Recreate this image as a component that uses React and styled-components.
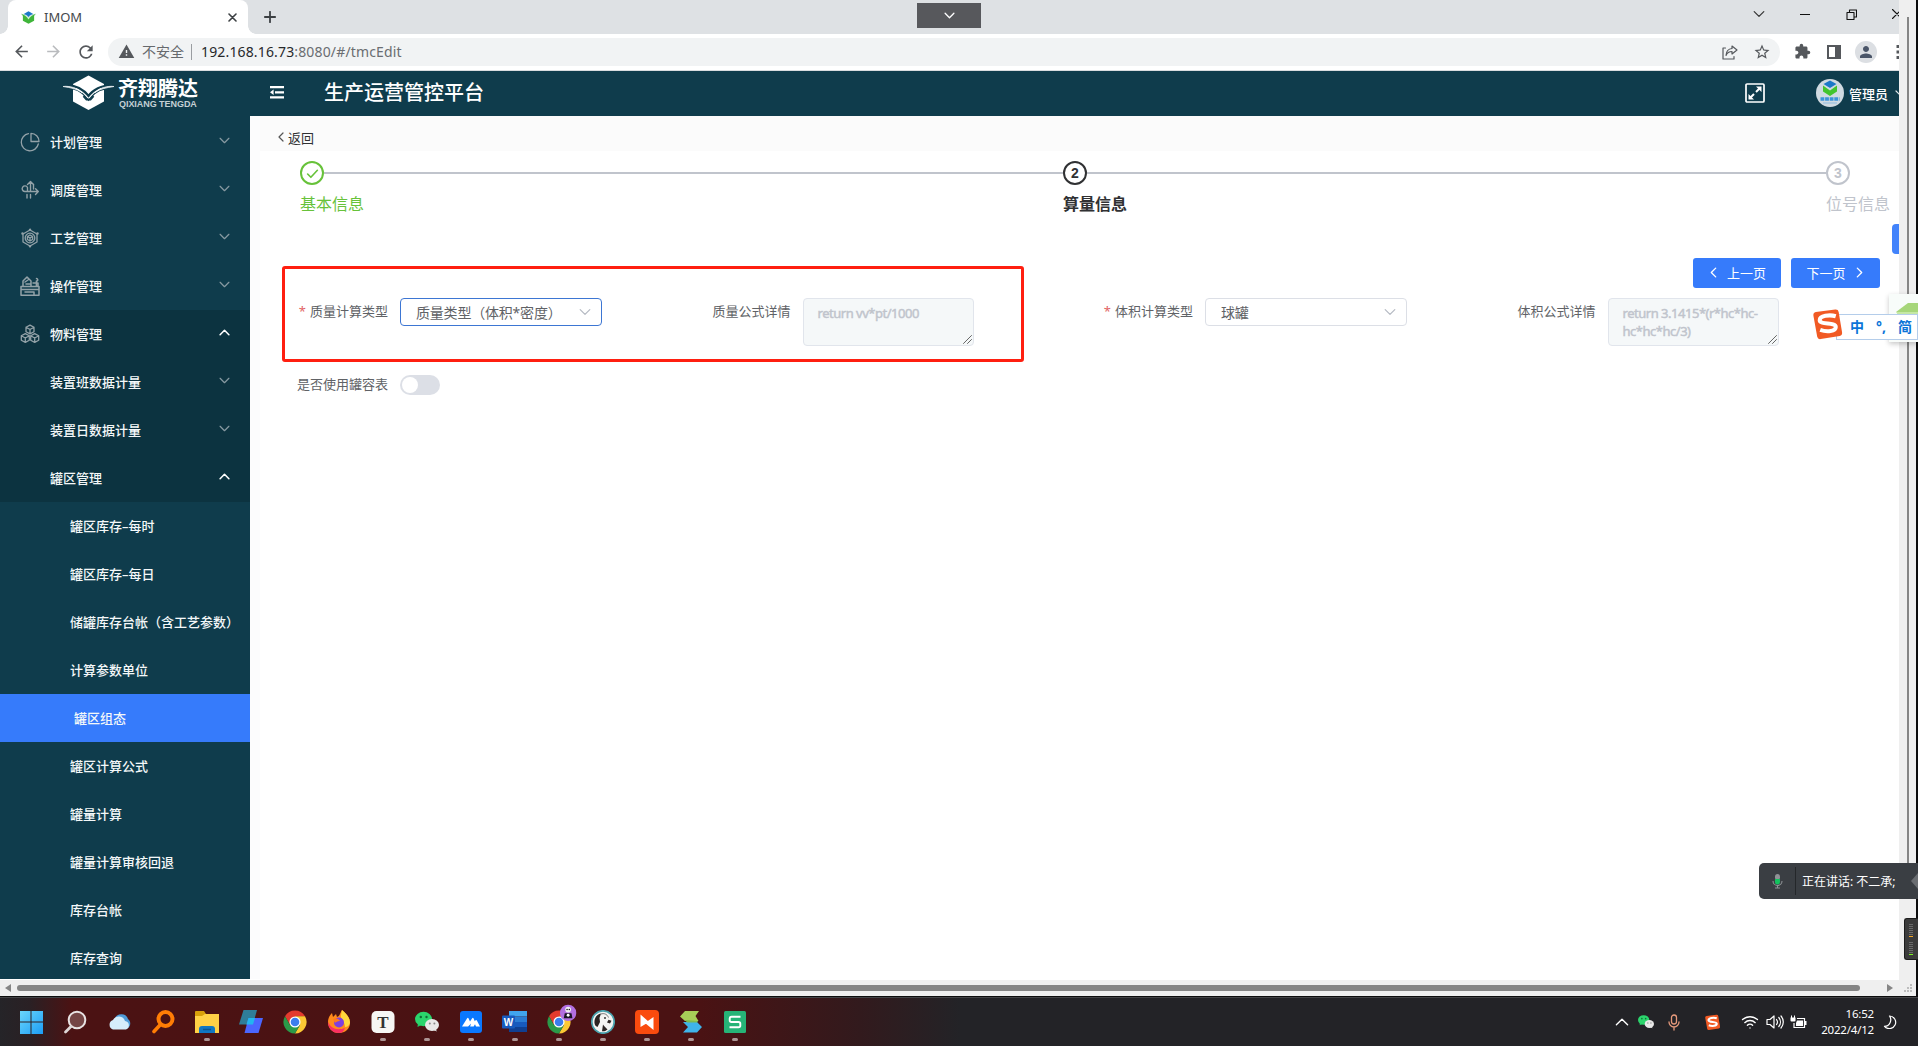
import React from 'react';
import styled, { createGlobalStyle, css } from 'styled-components';
import { MdArrowBack, MdArrowForward, MdRefresh, MdWarning, MdStarBorder, MdExtension, MdPerson } from 'react-icons/md';
import { Wifi } from 'lucide-react';

const Global = createGlobalStyle`
  * { box-sizing: border-box; }
  html, body { margin: 0; padding: 0; overflow: hidden; }
  body { font-family: "Noto Sans", "Noto Sans CJK SC", sans-serif; font-size: 13px; color: #333; }
  svg { display: block; flex: none; }
`;

const Screen = styled.div`
  position: relative;
  width: 1918px;
  height: 1046px;
  overflow: hidden;
  display: flex;
  flex-direction: column;
  background: #fff;
`;

const Win = styled.div`
  height: 997px;
  display: flex;
  flex-direction: column;
  border-right: 2px solid #0c0c0d;
  border-bottom: 1px solid #0c0c0d;
  background: #efefef;
`;

const Upper = styled.div`
  display: flex;
  height: 980px;
`;

const Page = styled.div`
  width: 1899px;
  height: 980px;
  overflow: hidden;
  background: #fff;
  flex: none;
`;

const VTrack = styled.div`
  flex: 1;
  display: flex;
  justify-content: center;
  padding-top: 17px;
`;

const VThumb = styled.div`
  width: 2px;
  height: 862px;
  background: #858585;
`;

const HTrack = styled.div`
  height: 16px;
  display: flex;
  align-items: center;
  padding: 0 3px 0 5px;
`;

const HThumb = styled.div`
  width: 1844px;
  height: 6px;
  margin: 0 27px 0 6px;
  border-radius: 3px;
  background: #858585;
`;

/* ---------- browser chrome ---------- */

const TabStrip = styled.div`
  height: 34px;
  display: flex;
  background: #dee1e4;
  padding-left: 8px;
`;

const Tab = styled.div`
  position: relative;
  width: 240px;
  display: flex;
  align-items: center;
  padding: 0 11px 0 13px;
  background: #fff;
  border-radius: 8px 8px 0 0;
  color: #45484c;
  font-size: 13px;
  &::before, &::after {
    content: "";
    position: absolute;
    bottom: 0;
    width: 8px;
    height: 8px;
  }
  &::before { left: -8px; background: radial-gradient(circle at 0 0, transparent 7.5px, #fff 8px); }
  &::after { right: -8px; background: radial-gradient(circle at 100% 0, transparent 7.5px, #fff 8px); }
`;

const TabTitle = styled.span`
  margin-left: 8px;
  flex: 1;
  line-height: 18px;
`;

const NewTab = styled.div`
  padding: 11px 0 0 16px;
  flex: 1;
`;

const WinButton = styled.div`
  width: 46px;
  height: 28px;
  flex: none;
  display: flex;
  align-items: center;
  justify-content: center;
`;

const WinButtons = styled.div`
  display: flex;
  width: 163px;
  overflow: hidden;
`;

const Toolbar = styled.div`
  height: 37px;
  display: flex;
  align-items: center;
  padding: 0 0 1px 12px;
  border-bottom: 1px solid #d9dcdf;
  color: #55585c;
  overflow: hidden;
`;

const NavIcon = styled.div`
  width: 32px;
  flex: none;
  display: flex;
  color: ${p => (p.$dim ? '#b9bbbe' : '#55585c')};
`;

const Address = styled.div`
  width: 1672px;
  height: 28px;
  margin-right: 6px;
  display: flex;
  align-items: center;
  padding: 0 2px 0 10px;
  border-radius: 14px;
  background: #f1f3f4;
  flex: none;
`;

const Insecure = styled.span`
  margin-left: 7px;
  padding-right: 7px;
  font-size: 14px;
  line-height: 16px;
  color: #66696d;
  border-right: 1px solid #9a9da1;
`;

const Url = styled.span`
  margin-left: 9px;
  flex: 1;
  font-size: 14px;
  letter-spacing: 0.15px;
  color: #6a6d71;
  b { font-weight: 400; color: #26282b; }
`;

const ToolIcon = styled.div`
  width: 32px;
  display: flex;
  justify-content: center;
  flex: none;
`;

const Profile = styled.div`
  width: 22px;
  height: 22px;
  border-radius: 50%;
  background: #dcdfe3;
  display: flex;
  align-items: center;
  justify-content: center;
  color: #4a5568;
`;

/* ---------- application ---------- */

const Header = styled.header`
  height: 45px;
  display: flex;
  align-items: center;
  padding-bottom: 1px;
  background: #0f3c4c;
  color: #fff;
`;

const Brand = styled.div`
  width: 250px;
  display: flex;
  align-items: center;
  padding-left: 63px;
`;

const BrandText = styled.div`
  margin-left: 4px;
`;

const BrandName = styled.div`
  font-size: 20px;
  line-height: 22px;
  font-weight: 700;
  white-space: nowrap;
`;

const BrandLatin = styled.div`
  padding-left: 1px;
  font: 700 9px/9px "Liberation Sans", sans-serif;
  letter-spacing: -0.05px;
  white-space: nowrap;
  color: #c3d0d4;
`;

const MenuToggle = styled.div`
  padding: 0 40px 1px 20px;
`;

const AppTitle = styled.h1`
  margin: 0;
  flex: 1;
  font-size: 20px;
  font-weight: 500;
  line-height: 30px;
`;

const UserName = styled.span`
  margin: 0 7px 0 5px;
  font-size: 13px;
  font-weight: 500;
`;

const UserBox = styled.div`
  width: 83px;
  margin-left: 51px;
  display: flex;
  align-items: center;
  overflow: hidden;
  white-space: nowrap;
`;

const Body = styled.div`
  display: flex;
  height: 863px;
`;

const Sidebar = styled.nav`
  width: 250px;
  flex: none;
  padding-top: 2px;
  background: #0f3c4c;
  overflow: hidden;
`;

const MenuRow = styled.div`
  height: 48px;
  display: flex;
  align-items: center;
  padding: 0 20.5px 0 ${p => p.$indent}px;
  background: ${p => (p.$active ? '#367bfb' : p.$dark ? '#0c3340' : 'transparent')};
  color: #f4f8f9;
  font-size: 13px;
  font-weight: 500;
  white-space: nowrap;
`;

const MenuIcon = styled.div`
  width: 30px;
  display: flex;
  color: #93a2a8;
`;

const MenuLabel = styled.span`
  flex: 1;
  line-height: 20px;
`;

const Caret = styled.div`
  padding-bottom: 4px;
  color: ${p => (p.$open ? '#fff' : '#8799a1')};
`;

const Main = styled.main`
  flex: 1;
  display: flex;
  flex-direction: column;
  background: #fff;
  border-left: 10px solid #fcfcfd;
`;

const BackBar = styled.div`
  height: 35px;
  display: flex;
  align-items: center;
  padding: 7px 0 0 16px;
  background: #fbfbfb;
  color: #303133;
  gap: 2px;
`;

const Steps = styled.div`
  height: 73px;
  display: flex;
  padding: 10px 0 0 40px;
`;

const stepColor = { done: '#67c23a', current: '#303133', wait: '#c0c4cc' };

const Step = styled.div`
  width: ${p => (p.$last ? 73 : 763)}px;
  flex: none;
  color: ${p => stepColor[p.$state]};
`;

const StepHead = styled.div`
  display: flex;
  align-items: center;
  height: 24px;
  &::after {
    content: "";
    flex: 1;
    height: 2px;
    background: ${p => (p.$last ? 'transparent' : '#c0c4cc')};
  }
`;

const StepCircle = styled.div`
  width: 24px;
  height: 24px;
  flex: none;
  border: 2px solid currentColor;
  border-radius: 50%;
  display: flex;
  align-items: center;
  justify-content: center;
  font: ${p => (p.$bold ? 700 : 500)} 14px/1 "Liberation Sans", sans-serif;
`;

const StepTitle = styled.div`
  font-size: 16px;
  line-height: 38px;
  font-weight: ${p => (p.$bold ? 700 : 400)};
`;

const DrawerHandle = styled.div`
  width: 7px;
  height: 30px;
  margin-left: auto;
  border-radius: 4px 0 0 4px;
  background: #4283fb;
`;

const Actions = styled.div`
  height: 44px;
  display: flex;
  justify-content: flex-end;
  gap: 10px;
  padding: 4px 19px 0 0;
`;

const Button = styled.button`
  width: ${p => p.$w}px;
  height: 30px;
  padding: 0 0 1px;
  display: flex;
  align-items: center;
  justify-content: center;
  gap: 8px;
  border: 0;
  border-radius: 3px;
  background: #367bfb;
  color: #fff;
  font: 400 13px "Noto Sans", "Noto Sans CJK SC", sans-serif;
`;

const Form = styled.div`
  display: grid;
  grid-template-columns: repeat(4, 402.5px);
  grid-template-rows: 73px 30px;
  padding-left: 20px;
`;

const Field = styled.div`
  display: flex;
  align-items: flex-start;
`;

const Label = styled.label`
  width: 120px;
  flex: none;
  padding-right: 12px;
  text-align: right;
  line-height: 27px;
  color: #606266;
  font-size: 13px;
  &::before {
    content: ${p => (p.$required ? '"*"' : 'none')};
    color: #e26466;
    margin-right: 4px;
  }
`;

const Select = styled.div`
  width: 202px;
  height: 28px;
  display: flex;
  align-items: center;
  justify-content: space-between;
  padding: 0 10px 1px 15px;
  border: 1px solid ${p => (p.$focus ? '#3d76d3' : '#dcdfe6')};
  border-radius: 4px;
  color: #606266;
  font-size: 14px;
  letter-spacing: -0.2px;
  white-space: nowrap;
`;

const TextArea = styled.div`
  position: relative;
  width: 171px;
  height: 48px;
  padding: 5px 14px;
  border: 1px solid #e1e5ec;
  border-radius: 4px;
  background: #f5f8f9;
  color: #c0c4cc;
  font: 400 13px/18px "Noto Sans", sans-serif;
  letter-spacing: -0.48px;
  -webkit-text-stroke: 0.45px #c0c4cc;
  white-space: pre;
`;

const Grip = styled.div`
  position: absolute;
  right: 1px;
  bottom: 1px;
`;

const Switch = styled.div`
  width: 40px;
  height: 20px;
  margin-top: 4px;
  padding: 2px;
  border-radius: 10px;
  background: #dcdfe6;
  &::before {
    content: "";
    display: block;
    width: 16px;
    height: 16px;
    border-radius: 50%;
    background: #fff;
  }
`;

/* ---------- overlays ---------- */

const floating = css`position: absolute;`;

const RedFrame = styled.div`
  ${floating}
  left: 282px;
  top: 266px;
  width: 742px;
  height: 96px;
  border: 3px solid #ff1f10;
  border-radius: 3px;
`;

const PullTab = styled.div`
  ${floating}
  left: 917px;
  top: 3px;
  width: 64px;
  height: 25px;
  background: #57585c;
  display: flex;
  align-items: center;
  justify-content: center;
`;

const ImeBack = styled.div`
  ${floating}
  left: 1889px;
  top: 294px;
  width: 29px;
  height: 48px;
  padding-top: 1px;
  background: #f8fcfa;
  box-shadow: 0 2px 5px rgba(0, 0, 0, 0.22);
`;

const ImeBar = styled.div`
  ${floating}
  left: 1836px;
  top: 314px;
  width: 82px;
  height: 26px;
  display: flex;
  align-items: center;
  padding: 0 0 1px 13px;
  border: 1px solid #b4cdea;
  background: #fff;
  color: #0b74d8;
  font-size: 14px;
  font-weight: 700;
  white-space: nowrap;
`;

const ImeChar = styled.span`
  width: ${p => p.$w}px;
  line-height: 22px;
  flex: none;
`;

const ImeLogo = styled.div`
  ${floating}
  left: 1811px;
  top: 308px;
`;

const Toast = styled.div`
  ${floating}
  left: 1759px;
  top: 863px;
  width: 159px;
  height: 36px;
  display: flex;
  align-items: center;
  border-radius: 5px 0 0 5px;
  background: #3a3e43;
  color: #fff;
  font-size: 12px;
  white-space: nowrap;
`;

const ToastMic = styled.div`
  width: 37px;
  height: 28px;
  display: flex;
  align-items: center;
  justify-content: center;
  border-right: 1px solid #24272a;
`;

const ToastText = styled.span`
  margin-left: 6px;
  flex: 1;
`;

const Meter = styled.div`
  ${floating}
  left: 1904px;
  top: 918px;
  width: 14px;
  height: 42px;
  padding: 5px 0 0 4px;
  border: 1px solid #1c1c1c;
  border-right: 0;
  border-radius: 3px 0 0 3px;
  background: #3b3b3b;
`;

const Bar = styled.div`
  width: 4px;
  height: 1px;
  margin-bottom: ${p => (p.$gap ? 5 : 1)}px;
  background: ${p => p.$c || '#6a6a6a'};
`;

/* ---------- taskbar ---------- */

const Taskbar = styled.footer`
  height: 49px;
  display: flex;
  padding-left: 8.5px;
  border-top: 1px solid #434446;
  background: linear-gradient(90deg, #252428 0, #2a2024 30px, #4b1213 72px, #4a1213 700px, #321a1d 860px, #232327 960px, #232327 100%);
`;

const Task = styled.div`
  width: 44px;
  display: flex;
  flex-direction: column;
  align-items: center;
  padding-top: 12px;
  &::after {
    content: "";
    width: 6px;
    height: 3px;
    margin-top: 4px;
    border-radius: 2px;
    background: ${p => (p.$running ? '#ad9595' : 'transparent')};
  }
`;

const Tray = styled.div`
  margin-left: auto;
  display: flex;
  align-items: center;
  padding-right: 13px;
  color: #fff;
`;

const TrayItem = styled.div`
  width: ${p => p.$w}px;
  display: flex;
  justify-content: center;
`;

const Clock = styled.div`
  width: 62px;
  text-align: right;
  font: 400 11.5px/16px "Noto Sans", sans-serif;
  letter-spacing: -0.2px;
  white-space: nowrap;
`;

/* ---------- drawings ---------- */

const Stroke = ({ w = 18, h = w, vb = `0 0 ${w} ${h}`, sw = 1.2, children, color = 'currentColor' }) => (
  <svg width={w} height={h} viewBox={vb} fill="none" stroke={color} strokeWidth={sw} strokeLinecap="round" strokeLinejoin="round">{children}</svg>
);

const Chevron = ({ dir = 'down', size = 10, sw = 1.2, color }) => {
  const d = { down: 'M1 3l4 4 4-4', up: 'M1 7l4-4 4 4', left: 'M7 1L3 5l4 4', right: 'M3 1l4 4-4 4' }[dir];
  return <Stroke w={size} vb="0 0 10 10" sw={sw} color={color}><path d={d} /></Stroke>;
};

const icons = {
  plan: <Stroke w={20} sw={1.3}><path d="M8.500 1.700A8.600 8.600 0 1 0 18.300 12" /><path d="M11 1.300V9.500h8A8 8 0 0 0 11 1.300z" /></Stroke>,
  dispatch: <Stroke w={20} sw={1.4}><path d="M10.500 11V1.800M7.500 4.500l3-3 3 3" /><path d="M7.500 11.500V7.500a2.800 2.800 0 1 0-2.800 4H18M15.500 8.800l2.800 2.800-2.800 2.800M13.500 4.500v4.500M7 14.500v3.500M10.500 14.500v3.500" /></Stroke>,
  craft: <Stroke w={20} sw={1.3}><path d="M10 2l7 4v8l-7 4-7-4V6z" /><circle cx="10" cy="10" r="4.800" /><path d="M10 7l2.600 1.500v3L10 13l-2.600-1.500v-3zM7.400 8.500L10 10l2.600-1.500M10 10v3" /><circle cx="10" cy="1.800" r=".6" /><circle cx="2.500" cy="5.500" r=".6" /><circle cx="17.500" cy="5.500" r=".6" /><circle cx="10" cy="18.200" r=".6" /></Stroke>,
  operate: <Stroke w={20} sw={1.5}><path d="M1 10.500h18v8.700H1zM1 13.500h18M5 16h9v3M3 10V5l4-4 4 4v5M5 6l3-2M16.500 2.500a1.300 1.300 0 1 1-.1 2.600v5M13 7h5v3M6 8h4" /></Stroke>,
  material: (
    <Stroke w={20} sw={1.3}>
      {[[10, 5.500], [5.300, 14], [14.700, 14]].map(([x, y]) => <path key={x} d={`M${x} ${y - 4.400}l4 2.200v4.400l-4 2.200-4-2.200v-4.400zM${x - 4} ${y - 2.200}l4 2.200 4-2.200M${x} ${y}v4.400`} />)}
    </Stroke>
  ),
};

const Leaf = ({ s }) => (
  <svg width={s} height={s} viewBox="0 0 24 24">
    <path d="M12 2l9 5-9 6-9-6z" fill="#1b78c8" />
    <path d="M0 6c6 1 9 3 12 6 3-3 6-5 12-6-2 2-3 3-3 4v7l-9 5-9-5v-7C3 9 2 8 0 6z" fill="#3fb53a" />
    <path d="M0 6c7 0 10 3 12 5 2-2 5-5 12-5-6 2-9 5-12 9C9 11 6 8 0 6z" fill="#fff" opacity=".75" />
  </svg>
);

const BrandMark = () => (
  <svg width="51" height="36" viewBox="0 0 51 36">
    <path d="M25.500 0.500L41 9v17.500L25.500 35 10 26.500V9z" fill="#fff" />
    <path d="M0 11.500c11-1 20 4 25.500 11C31 15 39 11 51 11.500" fill="none" stroke="#0f3c4c" strokeWidth="4.500" />
    <path d="M0 11.500c7-.8 14 1.500 19 6C14 13.800 7 12.500 0 11.500zM51 11.500c-7-.8-14 1.500-19 6 5-3.700 12-5 19-6z" fill="#fff" stroke="#dfe7ea" strokeWidth=".9" />
    <path d="M13 13.500c5 2 8.500 5 12.500 10 4-5 7.500-8 12.500-10" fill="none" stroke="#fff" strokeWidth="1.200" />
    <path d="M20.500 21l3 3.500h4l3-3.500" fill="none" stroke="#0f3c4c" strokeWidth="2" />
  </svg>
);

const Chrome = ({ s = 24, badge }) => (
  <svg width={s} height={s} viewBox="-0.500 -0.500 25 25" overflow="visible">
    <path d="M12 6h10.400A12 12 0 0 0 1.600 6L7 15z" fill="#e33b2e" />
    <path d="M17.200 15L12 24A12 12 0 0 0 22.400 6H12z" fill="#fcc934" />
    <path d="M6.800 15L1.600 6A12 12 0 0 0 12 24l5.200-9z" fill="#2a9a48" />
    <circle cx="12" cy="12" r="5.800" fill="#fff" /><circle cx="12" cy="12" r="4.500" fill="#3b7ded" />
    {badge && <g><circle cx="21.500" cy="2.500" r="8.500" fill="#b26fe0" /><circle cx="21.500" cy="-1" r="3" fill="#eee" /><path d="M18 3h7l1 5h-9z" fill="#191522" /><circle cx="21.500" cy="5" r="1.500" fill="#fff" /><circle cx="20.400" cy="-1" r=".7" /><circle cx="22.700" cy="-1" r=".7" /></g>}
  </svg>
);

const WeChat = ({ s = 24 }) => (
  <svg width={s} height={s} viewBox="0 0 24 24">
    <path d="M3 12l-.5 5 4-2z" fill="#22c762" />
    <ellipse cx="8.500" cy="9" rx="8.500" ry="7.200" fill="#2bd46c" />
    <circle cx="5.800" cy="7" r="1.200" fill="#116a35" /><circle cx="11.500" cy="7" r="1.200" fill="#116a35" />
    <path d="M20 18l2 3.500-5-2z" fill="#e2e2e2" />
    <ellipse cx="17" cy="15" rx="7" ry="6" fill="#e8e8e8" />
    <circle cx="14.800" cy="13.500" r="1" fill="#888" /><circle cx="19.400" cy="13.500" r="1" fill="#888" />
  </svg>
);

const Sogou = ({ s }) => (
  <svg width={s} height={s} viewBox="0 0 34 34">
    <path d="M5 4L25 1.500q3-.3 3.500 2.500L32 25q.5 3-2.500 3.800L10 32q-3 .5-3.600-2.500L2.500 8Q2 4.600 5 4z" fill="#f15a24" />
    <path d="M25.500 8.500C19 6.500 9 8 9 12.500c0 5 16.500 2 16.500 7 0 4.500-9 5.500-16 3" fill="none" stroke="#fff" strokeWidth="4.200" />
  </svg>
);

const Word = () => (
  <svg width="25" height="24" viewBox="0 0 25 24">
    <path d="M7 1h18v5.500H7z" fill="#41a5ee" /><path d="M7 6.500h18V12H7z" fill="#2b7cd3" /><path d="M7 12h18v5H7z" fill="#185abd" /><path d="M7 17h18v5H7z" fill="#103f91" />
    <rect x="0" y="5.500" width="13" height="13" rx="1" fill="#185abd" />
    <text x="6.500" y="15.500" fill="#fff" fontSize="10" fontWeight="700" textAnchor="middle" fontFamily="Liberation Sans, sans-serif">W</text>
  </svg>
);

const S24 = ({ children }) => <svg width="24" height="24" viewBox="0 0 24 24">{children}</svg>;

const tasks = [
  [0, <S24><defs><linearGradient id="w" x1="0" y1="0" x2="1" y2="1" gradientUnits="objectBoundingBox"><stop offset="0" stopColor="#6bd6fb" /><stop offset="1" stopColor="#1c9df5" /></linearGradient></defs><path d="M1 1h10.500v10.500H1zM12.500 1H24v10.500H12.500zM1 12.500h10.500V24H1zM12.500 12.500H24V24H12.500z" fill="url(#w)" /></S24>],
  [0, <S24><circle cx="14" cy="10" r="8.300" fill="#744545" stroke="#e8e3e3" strokeWidth="2" /><path d="M8 16.500L2.500 22" stroke="#ddd7d7" strokeWidth="2.800" strokeLinecap="round" /></S24>],
  [0, <S24><path d="M8 8a7 6.500 0 0 1 13 1c3 2 3 7 0 9H7z" fill="#4f9bd8" /><path d="M6 19.500a5 5 0 0 1 0-9.500 6.500 6.500 0 0 1 12 1 4.400 4.400 0 0 1 1 8.500z" fill="#d5edfb" /></S24>],
  [0, <S24><circle cx="14.500" cy="9" r="7" fill="none" stroke="#ff7d05" strokeWidth="4" /><path d="M9.500 14.500L3 21.500" stroke="#ff7d05" strokeWidth="3.600" strokeLinecap="round" /></S24>],
  [1, <S24><path d="M0 2q0-1 1-1h8l2 3v5H0z" fill="#d9a00a" /><path d="M0 6h7l3-2h14v19H0z" fill="#ffd146" /><path d="M4 23v-4q0-3 3-3h10q3 0 3 3v4z" fill="#1077c2" /><path d="M8 19.500h8" stroke="#0a5592" strokeWidth="1.500" /></S24>],
  [0, <S24><path d="M4.500 0H18l-4 14.500H0z" fill="#2f7d99" /><path d="M9.500 8H24l-4.500 15H5.500z" fill="#4b66ff" /><path d="M9.500 8h6.500l-2 6.500H7.500z" fill="#22b6f0" /></S24>],
  [0, <Chrome />],
  [0, <S24><path d="M12 23C5 23 1 18 1 12c0-4 2-7 4-9l1 4 3-3 1 3c3-1 3-4 5-7 5 4 8 8 8 13 0 6-5 10-11 10z" fill="#ff8a1c" /><path d="M15 0c5 4 8 8 8 13-1 3-3 4-5 4 0-6-5-7-4-12z" fill="#ffd83c" /><path d="M12 23C5 23 1 18 1 12c3 6 8 9 17 6-1 3-3 5-6 5z" fill="#fb2f63" /><circle cx="12" cy="12.500" r="5" fill="#7d3fe0" /><path d="M6 9c3-2 6 0 7 2-3 0-4 1-5 2z" fill="#ff7a1c" /></S24>],
  [1, <S24><rect x=".5" y="1" width="23" height="22" rx="5" fill="#f7f7f5" /><text x="12" y="18" fontSize="17" fontWeight="700" textAnchor="middle" fill="#333" fontFamily="Liberation Serif, serif">T</text></S24>],
  [1, <WeChat />],
  [1, <S24><rect x="1" y="1" width="22" height="22" rx="3" fill="#0a78ff" /><path d="M3 16.500L8 8.500q1-1.500 1.600 0L11 11.500l2-3q1-1.500 1.600 0l1.200 2.800.8-1q.8-.8 1.400.4L21 16.500h-4l-1-2.300-1.300 2.300h-3.600l1-3-3 3z" fill="#fff" /></S24>],
  [1, <Word />],
  [1, <Chrome badge />],
  [1, <S24><circle cx="12" cy="12" r="11.200" fill="#f4f4f2" stroke="#4aa3ae" strokeWidth="1.700" /><path d="M3.500 13C3 8 6 4 10 3.500L8.500 8 9 12l-2.500 5C4.500 16 3.700 15 3.500 13z" fill="#2b2422" /><path d="M17.500 9.800l3 1-1.500 2.700-3-1z" fill="#2b2422" /><path d="M12 14.500c1 2 3 3 4.500 5-2 1.800-4 2-5.500 1.700z" fill="#2b2422" /><path d="M10 4c3-1 6 0 7.500 3.500" fill="none" stroke="#555" strokeWidth=".8" /><circle cx="14" cy="8" r=".9" fill="#222" /></S24>],
  [1, <S24><rect x="0" y="0" width="24" height="24" rx="4" fill="#fa4b0e" /><path d="M5.500 4.500L14 12l-8.500 5zM18.500 7v13L10 13z" fill="#fff" /></S24>],
  [1, <S24><path d="M6 1h14l-3.500 5 3 5H6L1 6.500z" fill="#a7ce58" /><path d="M4 12h14l5 5-5 5.500H4L9 17z" fill="#3fb4ea" /><path d="M6 10l13 1-1 1.500H8z" fill="#7dbb50" /></S24>],
  [1, <S24><rect x="1" y="1" width="22" height="22" rx="1.500" fill="#26b477" /><path d="M17.500 6.800H8.500q-1.800 0-1.800 1.800v1.600q0 1.800 1.800 1.800h7q1.800 0 1.800 1.800v1.600q0 1.800-1.800 1.800h-9" fill="none" stroke="#fff" strokeWidth="1.900" /></S24>],
];

const menu = [
  { text: '计划管理', icon: 'plan', caret: 'down' },
  { text: '调度管理', icon: 'dispatch', caret: 'down' },
  { text: '工艺管理', icon: 'craft', caret: 'down' },
  { text: '操作管理', icon: 'operate', caret: 'down' },
  { text: '物料管理', icon: 'material', caret: 'up', dark: true },
  { text: '装置班数据计量', caret: 'down', dark: true, indent: 50 },
  { text: '装置日数据计量', caret: 'down', dark: true, indent: 50 },
  { text: '罐区管理', caret: 'up', dark: true, indent: 50 },
  { text: '罐区库存–每时', indent: 70 },
  { text: '罐区库存–每日', indent: 70 },
  { text: '储罐库存台帐（含工艺参数）', indent: 70 },
  { text: '计算参数单位', indent: 70 },
  { text: '罐区组态', indent: 74, active: true },
  { text: '罐区计算公式', indent: 70 },
  { text: '罐量计算', indent: 70 },
  { text: '罐量计算审核回退', indent: 70 },
  { text: '库存台帐', indent: 70 },
  { text: '库存查询', indent: 70 },
];

const ResizeGrip = () => <Grip><Stroke w={9} sw={0.9} color="#555"><path d="M.5 8.500l8-8M4.500 8.500l4-4" /></Stroke></Grip>;

function BrowserChrome() {
  return (
    <>
      <TabStrip>
        <Tab>
          <Leaf s={15} />
          <TabTitle>IMOM</TabTitle>
          <Stroke w={9} sw={1.600} color="#3c4043"><path d="M1 1l7 7M8 1L1 8" /></Stroke>
        </Tab>
        <NewTab><Stroke w={12} sw={1.800} color="#3c4043"><path d="M6 .8v10.400M.8 6h10.400" /></Stroke></NewTab>
        <WinButtons>
          <WinButton><Chevron size={12} sw={1} color="#333" /></WinButton>
          <WinButton><Stroke w={10} sw={1} color="#111"><path d="M0 5.500h10" /></Stroke></WinButton>
          <WinButton><Stroke w={11} sw={1.100} color="#111"><path d="M1 3.500h7v7H1zM3.500 3.500V1h7v7H8" /></Stroke></WinButton>
          <WinButton><Stroke w={10} sw={1.100} color="#111"><path d="M.5.5l9 9M9.500.5l-9 9" /></Stroke></WinButton>
        </WinButtons>
      </TabStrip>
      <Toolbar>
        <NavIcon><MdArrowBack size={19} /></NavIcon>
        <NavIcon $dim><MdArrowForward size={19} /></NavIcon>
        <NavIcon><MdRefresh size={20} /></NavIcon>
        <Address>
          <MdWarning size={17} />
          <Insecure>不安全</Insecure>
          <Url><b>192.168.16.73</b>:8080/#/tmcEdit</Url>
          <ToolIcon><Stroke w={16} sw={1.200}><path d="M3.500 4H1v11h11v-2.500M10 2l5 4-5 4V7.500C7 7.500 5 9 4 11.500 4.200 7.500 6 4.800 10 4.500z" /></Stroke></ToolIcon>
          <ToolIcon><MdStarBorder size={18} /></ToolIcon>
        </Address>
        <ToolIcon><MdExtension size={17} /></ToolIcon>
        <ToolIcon><svg width="14" height="14" viewBox="0 0 14 14"><path d="M0 0h14v14H0zM2 2v10h6V2z" fill="currentColor" fillRule="evenodd" /></svg></ToolIcon>
        <ToolIcon><Profile><MdPerson size={18} /></Profile></ToolIcon>
        <ToolIcon><svg width="4" height="14" viewBox="0 0 4 14"><path d="M.5 0h3v3h-3zM.5 5.500h3v3h-3zM.5 11h3v3h-3z" fill="currentColor" /></svg></ToolIcon>
      </Toolbar>
    </>
  );
}

function AppHeader() {
  return (
    <Header>
      <Brand>
        <BrandMark />
        <BrandText>
          <BrandName>齐翔腾达</BrandName>
          <BrandLatin>QIXIANG TENGDA</BrandLatin>
        </BrandText>
      </Brand>
      <MenuToggle>
        <svg width="14" height="13" viewBox="0 0 14 13"><path d="M0 0h14v2.200H0zM5 5.200h9v2.200H5zM0 10.300h14v2.200H0zM0 6.300l3.600-2.800v5.600z" fill="#fff" /></svg>
      </MenuToggle>
      <AppTitle>生产运营管控平台</AppTitle>
      <svg width="20" height="20" viewBox="0 0 20 20"><rect x="1" y="1" width="18" height="18" rx="1" fill="none" stroke="#fff" strokeWidth="1.700" /><path d="M11 3.500H16.500V9zM3.500 11V16.500H9z" fill="#fff" /><path d="M15 5l-4 4M5 15l4-4" stroke="#fff" strokeWidth="2" /></svg>
      <UserBox>
        <svg width="28" height="28" viewBox="0 0 28 28">
          <circle cx="14" cy="14" r="14" fill="#d0dae1" />
          <path d="M7.500 5L14 1.500 20.500 5 14 9z" fill="#1b78c8" />
          <path d="M7 6.500l7 5 7-5v6l-7 4.500-7-4.500z" fill="#42c52e" />
          <path d="M4.500 20h19" stroke="#3d94d8" strokeWidth="3.500" strokeDasharray="3.800 .8" />
          <path d="M7 24h14" stroke="#8fbde0" strokeWidth="1" />
        </svg>
        <UserName>管理员</UserName>
        <Chevron color="#dfe8eb" />
      </UserBox>
    </Header>
  );
}

export default function App() {
  return (
    <Screen>
      <Global />
      <Win>
        <Upper>
          <Page>
            <BrowserChrome />
            <AppHeader />
            <Body>
              <Sidebar>
                {menu.map(m => (
                  <MenuRow key={m.text} $indent={m.icon ? 20 : m.indent} $dark={m.dark} $active={m.active}>
                    {m.icon && <MenuIcon>{icons[m.icon]}</MenuIcon>}
                    <MenuLabel>{m.text}</MenuLabel>
                    {m.caret && <Caret $open={m.caret === 'up'}><Chevron dir={m.caret} size={11} sw={m.caret === 'up' ? 1.400 : 1.100} /></Caret>}
                  </MenuRow>
                ))}
              </Sidebar>
              <Main>
                <BackBar><Chevron dir="left" size={10} color="#555" />返回</BackBar>
                <Steps>
                  <Step $state="done">
                    <StepHead><StepCircle><Stroke w={13} vb="0 0 12 12" sw={1.500}><path d="M1.500 6.500l3 3 6-6.500" /></Stroke></StepCircle></StepHead>
                    <StepTitle>基本信息</StepTitle>
                  </Step>
                  <Step $state="current">
                    <StepHead><StepCircle $bold>2</StepCircle></StepHead>
                    <StepTitle $bold>算量信息</StepTitle>
                  </Step>
                  <Step $state="wait" $last>
                    <StepHead $last><StepCircle $bold>3</StepCircle></StepHead>
                    <StepTitle>位号信息</StepTitle>
                  </Step>
                </Steps>
                <DrawerHandle />
                <Actions>
                  <Button $w={88}><Chevron dir="left" size={11} />上一页</Button>
                  <Button $w={89}>下一页<Chevron dir="right" size={11} /></Button>
                </Actions>
                <Form>
                  <Field>
                    <Label $required>质量计算类型</Label>
                    <Select $focus>质量类型（体积*密度）<Chevron size={12} sw={1} color="#b4b9c2" /></Select>
                  </Field>
                  <Field>
                    <Label>质量公式详情</Label>
                    <TextArea>return vv*pt/1000<ResizeGrip /></TextArea>
                  </Field>
                  <Field>
                    <Label $required>体积计算类型</Label>
                    <Select>球罐<Chevron size={12} sw={1} color="#b4b9c2" /></Select>
                  </Field>
                  <Field>
                    <Label>体积公式详情</Label>
                    <TextArea>{'return 3.1415*(r*hc*hc-\nhc*hc*hc/3)'}<ResizeGrip /></TextArea>
                  </Field>
                  <Field>
                    <Label>是否使用罐容表</Label>
                    <Switch />
                  </Field>
                </Form>
              </Main>
            </Body>
          </Page>
          <VTrack><VThumb /></VTrack>
        </Upper>
        <HTrack>
          <svg width="6" height="8" viewBox="0 0 6 8"><path d="M6 0v8L0 4z" fill="#858585" /></svg>
          <HThumb />
          <svg width="6" height="8" viewBox="0 0 6 8"><path d="M0 0v8l6-4z" fill="#858585" /></svg>
          <svg width="20" height="9" viewBox="0 0 20 9"><path d="M17 0h2v2h-2zM14 3h2v2h-2zM17 3h2v2h-2zM11 6h2v2h-2zM14 6h2v2h-2zM17 6h2v2h-2z" fill="#bdbdbd" /></svg>
        </HTrack>
      </Win>

      <Taskbar>
        {tasks.map(([running, icon], i) => <Task key={i} $running={running}>{icon}</Task>)}
        <Tray>
          <TrayItem $w={24}><Chevron dir="up" size={14} sw={1} color="#fff" /></TrayItem>
          <TrayItem $w={24}><WeChat s={16} /></TrayItem>
          <TrayItem $w={32}><Stroke w={12} h={17} sw={1.300} color="#e69a7c"><rect x="3.500" y="1" width="5" height="9" rx="2.500" /><path d="M1 8a5 5 0 0 0 10 0M6 13v3" /></Stroke></TrayItem>
          <TrayItem $w={44}><Sogou s={17} /></TrayItem>
          <TrayItem $w={32}><Wifi size={18} strokeWidth={1.800} /></TrayItem>
          <TrayItem $w={18}><Stroke w={18} h={16} sw={1.200}><path d="M1 5.500h3L8 2v12l-4-3.500H1zM10.500 5.500a4 4 0 0 1 0 5M12.800 3.500a7 7 0 0 1 0 9M15 2a9 9 0 0 1 0 12" /></Stroke></TrayItem>
          <TrayItem $w={28}><svg width="17" height="14" viewBox="0 0 17 14"><path d="M7 3.500h7.500v9H4V8" fill="none" stroke="#fff" strokeWidth="1.200" /><path d="M7 5.500h6v5.500H6V8zM15 6h1.500v4H15zM.5 2.500h5v3q0 1-1 1h-3q-1 0-1-1zM1 .5h1v2H1zM4 .5h1v2H4z" fill="#fff" /></svg></TrayItem>
          <Clock>16:52<br />2022/4/12</Clock>
          <TrayItem $w={31}><Stroke w={14} sw={1.200}><path d="M6.500 1A6.300 6.300 0 1 1 1.500 11.300 6.500 6.500 0 0 0 6.500 1z" /></Stroke></TrayItem>
        </Tray>
      </Taskbar>

      <PullTab><Chevron size={11} sw={1.200} color="#fff" /></PullTab>
      <RedFrame />
      <ImeBack><svg width="29" height="20" viewBox="0 0 29 20"><path d="M7 17l12-9h10v9z" fill="#a6d67a" /><path d="M7 17h22v3H9z" fill="#c5e8a5" /></svg></ImeBack>
      <ImeBar><ImeChar $w={26}>中</ImeChar><ImeChar $w={22}>°,</ImeChar><ImeChar $w={15}>简</ImeChar></ImeBar>
      <ImeLogo><Sogou s={33} /></ImeLogo>
      <Toast>
        <ToastMic>
          <svg width="11" height="15" viewBox="0 0 11 15"><rect x="3" y="0" width="5" height="6" rx="2.500" fill="#8f9296" /><path d="M3 5h5v3a2.500 2.500 0 0 1-5 0z" fill="#13c25e" /><path d="M1 7a4.500 4.500 0 0 0 9 0M5.500 11.500V14M3 14h5" fill="none" stroke="#8f9296" strokeWidth="1.100" /></svg>
        </ToastMic>
        <ToastText>正在讲话: 不二承;</ToastText>
        <svg width="7" height="18" viewBox="0 0 7 18"><path d="M7 1v16L0 9z" fill="#6a6d71" /></svg>
      </Toast>
      <Meter>
        {[0, 1, 2, 3, 4, 5, 6].map(i => <Bar key={i} $c={i === 6 ? '#f5a623' : undefined} $gap={i === 6} />)}
        {[0, 1, 2, 3, 4, 5, 6].map(i => <Bar key={i} $c={i === 6 ? '#7bf01f' : undefined} />)}
      </Meter>
    </Screen>
  );
}
